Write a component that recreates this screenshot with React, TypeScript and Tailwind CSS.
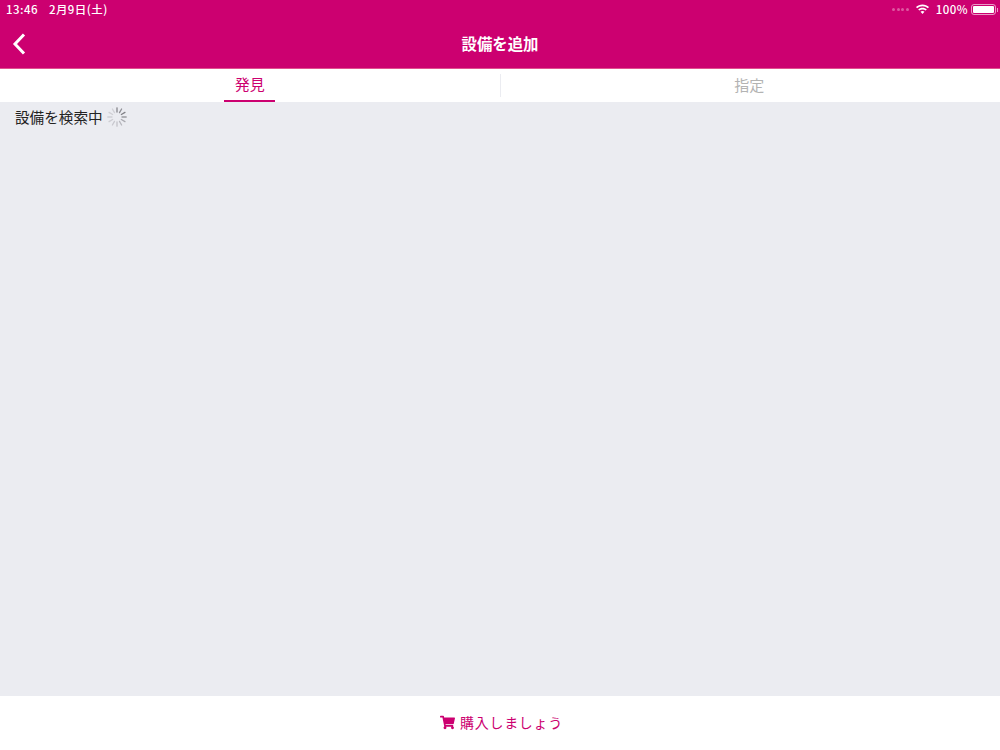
import { FaShoppingCart } from "react-icons/fa";

const FONT = "font-['Noto_Sans_CJK_JP','Liberation_Sans',sans-serif]";

const spokes = [
  { angle: 0, color: "#85858b" },
  { angle: 30, color: "#8f8f95" },
  { angle: 60, color: "#808086" },
  { angle: 90, color: "#9a9aa0" },
  { angle: 120, color: "#aaaab0" },
  { angle: 150, color: "#b8b8be" },
  { angle: 180, color: "#c2c2c8" },
  { angle: 210, color: "#c8c8ce" },
  { angle: 240, color: "#cdcdd2" },
  { angle: 270, color: "#d0d0d5" },
  { angle: 300, color: "#d0d0d5" },
  { angle: 330, color: "#d0d0d5" },
];

function Spinner() {
  return (
    <svg width="20" height="20" viewBox="0 0 20 20" className="ml-[4px]">
      {spokes.map((s) => (
        <line
          key={s.angle}
          x1="10"
          y1="0.8"
          x2="10"
          y2="5"
          stroke={s.color}
          strokeWidth="1.3"
          strokeLinecap="round"
          transform={`rotate(${s.angle} 10 10)`}
        />
      ))}
    </svg>
  );
}

function StatusBar() {
  return (
    <div className="flex h-[19px] items-center justify-between pl-[6px] pr-[2px] text-[11.5px] font-medium tracking-[0.45px] text-white">
      <div className="flex gap-[11px]">
        <span>13:46</span>
        <span>2月9日(土)</span>
      </div>
      <div className="flex items-center">
        <div className="mr-[6px] flex gap-[1.5px]">
          <span className="h-[3px] w-[3px] rounded-full bg-white/35" />
          <span className="h-[3px] w-[3px] rounded-full bg-white/35" />
          <span className="h-[3px] w-[3px] rounded-full bg-white/35" />
          <span className="h-[3px] w-[3px] rounded-full bg-white/35" />
        </div>
        <svg width="15" height="11" viewBox="0 0 15 11" fill="white" className="mr-[6px]">
          <path d="M7.5 2.2c2.1 0 4 .8 5.4 2.1l1.1-1.2C12.3 1.5 10 .5 7.5.5S2.7 1.5 1 3.1l1.1 1.2C3.5 3 5.4 2.2 7.5 2.2z" />
          <path d="M7.5 5.4c1.2 0 2.3.5 3.2 1.2l1.1-1.2c-1.1-1-2.7-1.7-4.3-1.7s-3.2.7-4.3 1.7l1.1 1.2c.9-.7 2-1.2 3.2-1.2z" />
          <path d="M7.5 7c-.8 0-1.5.3-2 .8l2 2.2 2-2.2c-.5-.5-1.2-.8-2-.8z" />
        </svg>
        <span className="mr-[3px]">100%</span>
        <div className="h-[11px] w-[25px] rounded-[3px] border border-white/60 p-[1px]">
          <div className="h-full w-full rounded-[1px] bg-white" />
        </div>
        <div className="ml-[1px] h-[4px] w-[1px] bg-white/60" />
      </div>
    </div>
  );
}

export default function App() {
  return (
    <div className={`flex h-[750px] w-[1000px] flex-col bg-[#ebecf1] ${FONT}`}>
      <div className="h-[69px] border-b border-[#e0508f] bg-[#cc0070]">
        <StatusBar />
        <div className="relative flex h-[49px] items-center justify-center">
          <svg
            width="14"
            height="22"
            viewBox="0 0 14 22"
            fill="none"
            stroke="white"
            strokeWidth="3"
            className="absolute left-[12px] top-[14px]"
          >
            <path d="M12 1.5 3 11l9 9.5" />
          </svg>
          <span className="text-[15.4px] font-bold text-white">設備を追加</span>
        </div>
      </div>

      <div className="flex h-[33px] bg-white text-[15px]">
        <div className="flex flex-1 justify-center">
          <div className="flex w-[51px] items-center justify-center border-b-2 border-[#cc0070] text-[#cc0070]">
            発見
          </div>
        </div>
        <div className="my-[5px] w-px bg-[#ebecf1]" />
        <div className="flex flex-1 items-center justify-center text-[#b3b3b3]">
          <span className="mr-[2px]">指定</span>
        </div>
      </div>

      <div className="flex-1">
        <div className="flex items-center pl-[15px] pt-[5px] text-[14.6px] leading-[20px] text-[#222222]">
          <span>設備を検索中</span>
          <Spinner />
        </div>
      </div>

      <div className="flex h-[54px] items-center justify-center bg-white pb-[2px] pl-[3px] text-[14px] tracking-[0.7px] text-[#cc0070]">
        <FaShoppingCart size={15} className="mr-[5px]" />
        <span>購入しましょう</span>
      </div>
    </div>
  );
}
